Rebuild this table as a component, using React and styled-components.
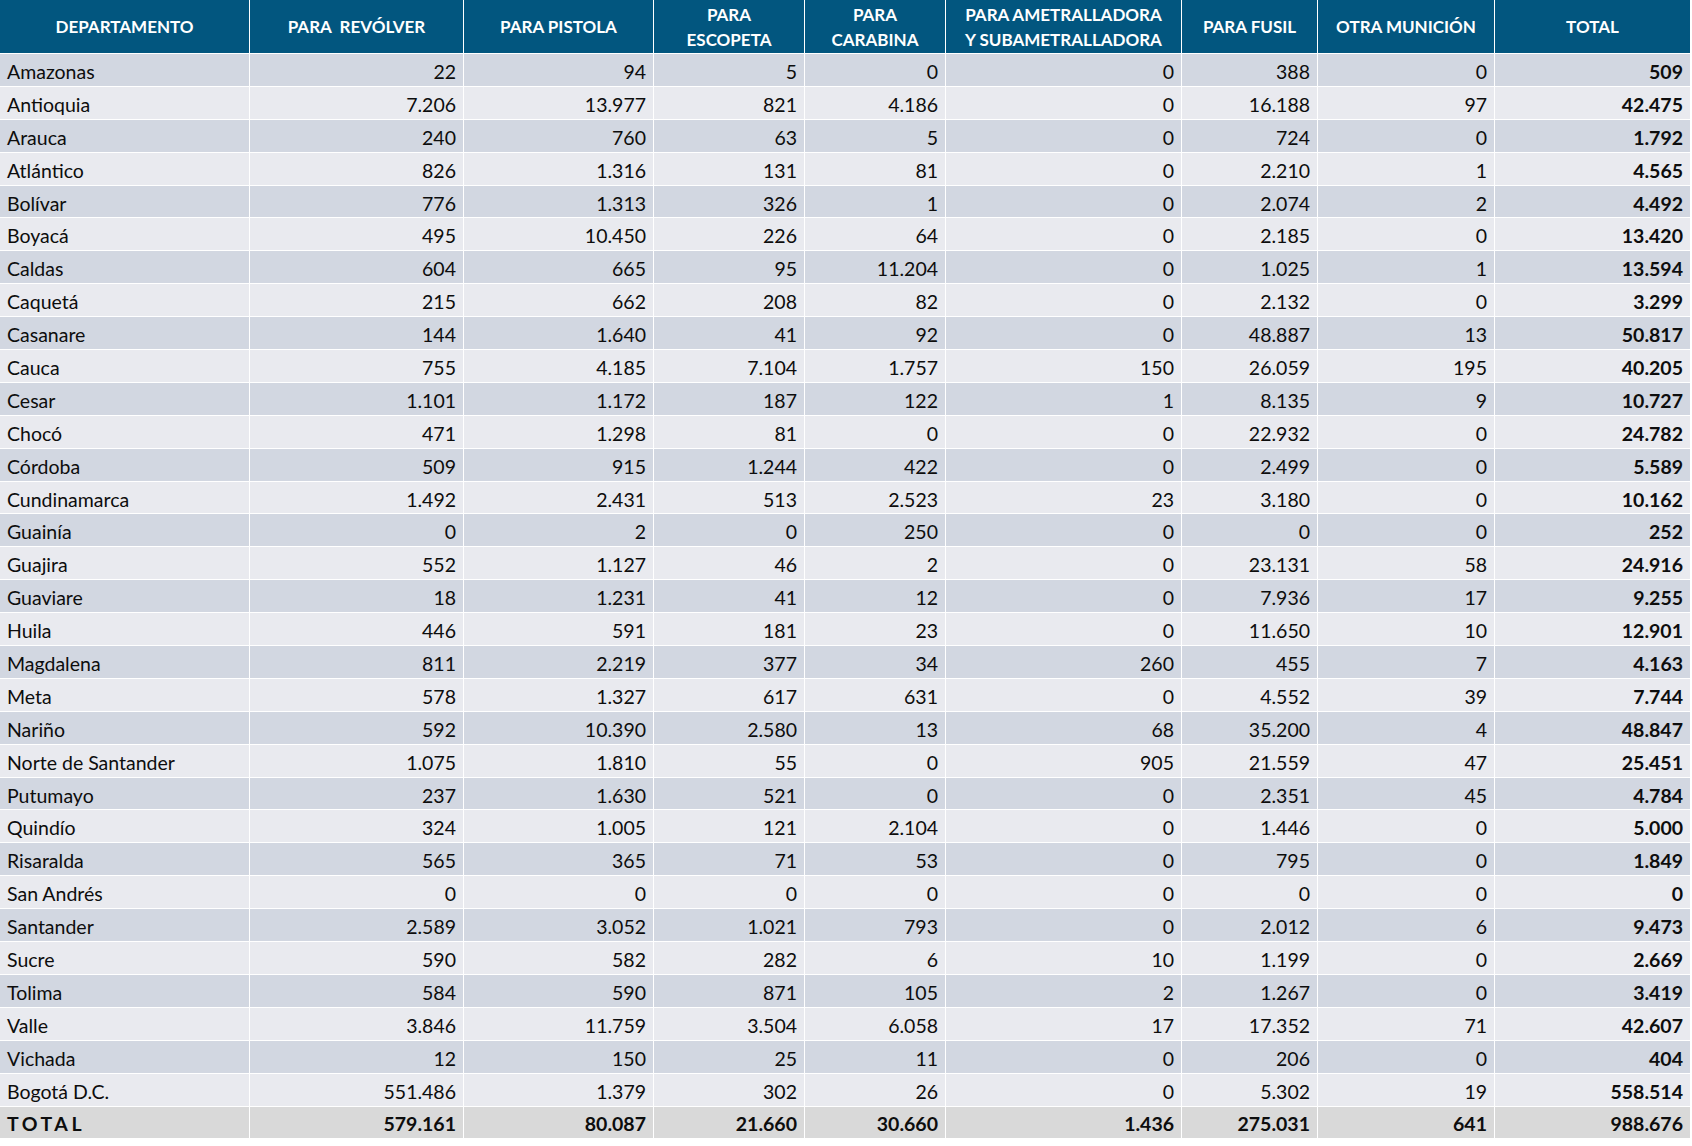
import React from 'react';
import styled, { createGlobalStyle } from 'styled-components';

const GlobalStyle = createGlobalStyle`
  html, body {
    margin: 0;
    padding: 0;
    background: #ffffff;
  }
  body {
    font-family: Lato, "Open Sans", sans-serif;
  }
`;

const columns = '249px 213px 189px 150px 140px 235px 135px 176px 195px';

const headers = [
  ['DEPARTAMENTO'],
  ['PARA\u00a0 REVÓLVER'],
  ['PARA PISTOLA'],
  ['PARA', 'ESCOPETA'],
  ['PARA', 'CARABINA'],
  ['PARA AMETRALLADORA', 'Y SUBAMETRALLADORA'],
  ['PARA FUSIL'],
  ['OTRA MUNICIÓN'],
  ['TOTAL'],
];

const rows = [
  ['Amazonas', '22', '94', '5', '0', '0', '388', '0', '509'],
  ['Antioquia', '7.206', '13.977', '821', '4.186', '0', '16.188', '97', '42.475'],
  ['Arauca', '240', '760', '63', '5', '0', '724', '0', '1.792'],
  ['Atlántico', '826', '1.316', '131', '81', '0', '2.210', '1', '4.565'],
  ['Bolívar', '776', '1.313', '326', '1', '0', '2.074', '2', '4.492'],
  ['Boyacá', '495', '10.450', '226', '64', '0', '2.185', '0', '13.420'],
  ['Caldas', '604', '665', '95', '11.204', '0', '1.025', '1', '13.594'],
  ['Caquetá', '215', '662', '208', '82', '0', '2.132', '0', '3.299'],
  ['Casanare', '144', '1.640', '41', '92', '0', '48.887', '13', '50.817'],
  ['Cauca', '755', '4.185', '7.104', '1.757', '150', '26.059', '195', '40.205'],
  ['Cesar', '1.101', '1.172', '187', '122', '1', '8.135', '9', '10.727'],
  ['Chocó', '471', '1.298', '81', '0', '0', '22.932', '0', '24.782'],
  ['Córdoba', '509', '915', '1.244', '422', '0', '2.499', '0', '5.589'],
  ['Cundinamarca', '1.492', '2.431', '513', '2.523', '23', '3.180', '0', '10.162'],
  ['Guainía', '0', '2', '0', '250', '0', '0', '0', '252'],
  ['Guajira', '552', '1.127', '46', '2', '0', '23.131', '58', '24.916'],
  ['Guaviare', '18', '1.231', '41', '12', '0', '7.936', '17', '9.255'],
  ['Huila', '446', '591', '181', '23', '0', '11.650', '10', '12.901'],
  ['Magdalena', '811', '2.219', '377', '34', '260', '455', '7', '4.163'],
  ['Meta', '578', '1.327', '617', '631', '0', '4.552', '39', '7.744'],
  ['Nariño', '592', '10.390', '2.580', '13', '68', '35.200', '4', '48.847'],
  ['Norte de Santander', '1.075', '1.810', '55', '0', '905', '21.559', '47', '25.451'],
  ['Putumayo', '237', '1.630', '521', '0', '0', '2.351', '45', '4.784'],
  ['Quindío', '324', '1.005', '121', '2.104', '0', '1.446', '0', '5.000'],
  ['Risaralda', '565', '365', '71', '53', '0', '795', '0', '1.849'],
  ['San Andrés', '0', '0', '0', '0', '0', '0', '0', '0'],
  ['Santander', '2.589', '3.052', '1.021', '793', '0', '2.012', '6', '9.473'],
  ['Sucre', '590', '582', '282', '6', '10', '1.199', '0', '2.669'],
  ['Tolima', '584', '590', '871', '105', '2', '1.267', '0', '3.419'],
  ['Valle', '3.846', '11.759', '3.504', '6.058', '17', '17.352', '71', '42.607'],
  ['Vichada', '12', '150', '25', '11', '0', '206', '0', '404'],
  ['Bogotá D.C.', '551.486', '1.379', '302', '26', '0', '5.302', '19', '558.514'],
];

const totals = ['TOTAL', '579.161', '80.087', '21.660', '30.660', '1.436', '275.031', '641', '988.676'];

const tones = {
  odd: '#d2d7e1',
  even: '#e9eaef',
  total: '#d9d9d9',
};

const Table = styled.div`
  width: 1690px;
  display: flex;
  flex-direction: column;
  gap: 1px;
  background: #ffffff;
`;

const Row = styled.div`
  display: grid;
  grid-template-columns: ${columns};
  column-gap: 1px;
  height: ${(p) => (p.$head ? '53px' : '31.9px')};
`;

const HeadCell = styled.div`
  background: #02567f;
  color: #ffffff;
  font-weight: 700;
  font-size: 17px;
  line-height: 25px;
  text-align: center;
  display: flex;
  flex-direction: column;
  align-items: center;
  justify-content: center;
  white-space: nowrap;
`;

const Cell = styled.div`
  background: ${(p) => tones[p.$tone]};
  color: #0d0d0d;
  font-size: 19.5px;
  font-weight: ${(p) => (p.$bold ? 700 : 400)};
  letter-spacing: ${(p) => (p.$label && p.$bold ? '3.5px' : '0')};
  display: flex;
  align-items: center;
  justify-content: ${(p) => (p.$label ? 'flex-start' : 'flex-end')};
  padding: 3px 7px 0;
  box-sizing: border-box;
  white-space: nowrap;
`;

const DataRow = ({ values, tone, total }) => (
  <Row>
    {values.map((v, i) => (
      <Cell
        key={i}
        $tone={tone}
        $label={i === 0}
        $bold={total || i === values.length - 1}
      >
        {v}
      </Cell>
    ))}
  </Row>
);

export default function App() {
  return (
    <>
      <GlobalStyle />
      <Table>
        <Row $head>
          {headers.map((lines) => (
            <HeadCell key={lines.join(' ')}>
              {lines.map((l) => (
                <span key={l}>{l}</span>
              ))}
            </HeadCell>
          ))}
        </Row>
        {rows.map((r, i) => (
          <DataRow key={r[0]} values={r} tone={i % 2 === 0 ? 'odd' : 'even'} />
        ))}
        <DataRow values={totals} tone="total" total />
      </Table>
    </>
  );
}
